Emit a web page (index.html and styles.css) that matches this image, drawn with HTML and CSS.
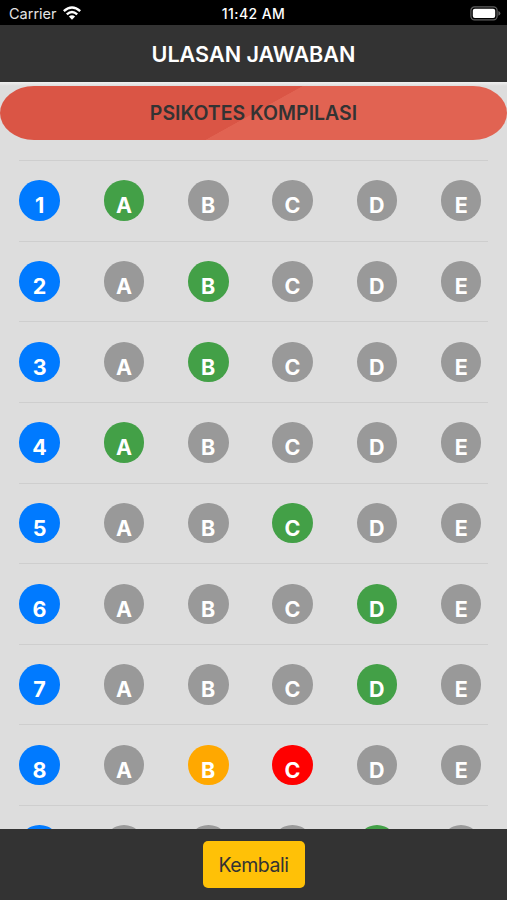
FILE: index.html
```html
<!DOCTYPE html>
<html lang="id">
<head>
  <meta charset="UTF-8">
  <meta name="viewport" content="width=device-width, initial-scale=1.0">
  <title>Ulasan Jawaban</title>
  <link rel="stylesheet" href="styles.css">
</head>
<body>
  <div class="status-bar">
    <div class="carrier">
      <span>Carrier</span>
      <svg class="wifi" viewBox="0 0 18 14" width="18" height="14">
        <g fill="none" stroke="#fff" stroke-width="2.4">
          <path d="M0.8 5.2 Q9 -2.4 17.2 5.2"/>
          <path d="M3.8 8.3 Q9 3.5 14.2 8.3"/>
        </g>
        <path d="M5.9 10.6 Q9 8 12.1 10.6 L9 13.8 Z" fill="#fff"/>
      </svg>
    </div>
    <span class="time">11:42 AM</span>
    <svg class="battery" viewBox="0 0 31 15" width="31" height="15">
      <rect x="0.9" y="0.9" width="26.2" height="13" rx="3.6" fill="none" stroke="#606060" stroke-width="1.2"/>
      <rect x="2.8" y="2.7" width="22.4" height="9.4" rx="2" fill="#fff"/>
      <path d="M28.4 5 Q30.4 6 30.4 7.4 Q30.4 8.8 28.4 9.8 Z" fill="#606060"/>
    </svg>
  </div>

  <header class="header">
    <h1>ULASAN JAWABAN</h1>
  </header>

  <main class="content">
    <h2 class="category">PSIKOTES KOMPILASI</h2>
    <div class="answers">
      <div class="row">
        <span class="circle number">1</span>
        <span class="circle correct">A</span>
        <span class="circle">B</span>
        <span class="circle">C</span>
        <span class="circle">D</span>
        <span class="circle">E</span>
      </div>
      <div class="row">
        <span class="circle number">2</span>
        <span class="circle">A</span>
        <span class="circle correct">B</span>
        <span class="circle">C</span>
        <span class="circle">D</span>
        <span class="circle">E</span>
      </div>
      <div class="row">
        <span class="circle number">3</span>
        <span class="circle">A</span>
        <span class="circle correct">B</span>
        <span class="circle">C</span>
        <span class="circle">D</span>
        <span class="circle">E</span>
      </div>
      <div class="row">
        <span class="circle number">4</span>
        <span class="circle correct">A</span>
        <span class="circle">B</span>
        <span class="circle">C</span>
        <span class="circle">D</span>
        <span class="circle">E</span>
      </div>
      <div class="row">
        <span class="circle number">5</span>
        <span class="circle">A</span>
        <span class="circle">B</span>
        <span class="circle correct">C</span>
        <span class="circle">D</span>
        <span class="circle">E</span>
      </div>
      <div class="row">
        <span class="circle number">6</span>
        <span class="circle">A</span>
        <span class="circle">B</span>
        <span class="circle">C</span>
        <span class="circle correct">D</span>
        <span class="circle">E</span>
      </div>
      <div class="row">
        <span class="circle number">7</span>
        <span class="circle">A</span>
        <span class="circle">B</span>
        <span class="circle">C</span>
        <span class="circle correct">D</span>
        <span class="circle">E</span>
      </div>
      <div class="row">
        <span class="circle number">8</span>
        <span class="circle">A</span>
        <span class="circle answer">B</span>
        <span class="circle wrong">C</span>
        <span class="circle">D</span>
        <span class="circle">E</span>
      </div>
      <div class="row">
        <span class="circle number"></span>
        <span class="circle"></span>
        <span class="circle"></span>
        <span class="circle"></span>
        <span class="circle correct"></span>
        <span class="circle"></span>
      </div>
    </div>
  </main>

  <footer class="footer">
    <button class="btn-back" type="button">Kembali</button>
  </footer>
</body>
</html>
```

FILE: styles.css
```css
* {
  box-sizing: border-box;
}
body {
  font-family: Inter, "Liberation Sans", sans-serif;
  margin: 0;
  height: 900px;
  display: flex;
  flex-direction: column;
  overflow: hidden;
  background: #ddd;
}
.status-bar {
  flex: none;
  display: grid;
  grid-template-columns: 1fr auto 1fr;
  align-items: center;
  height: 25px;
  padding: 2px 6px 0 9px;
  background: #000;
  color: #fff;
  font-size: 14.5px;
}
.carrier {
  display: flex;
  align-items: center;
  gap: 6px;
  color: #e4e4e4;
}
.wifi {
  margin-top: -2px;
}
.time {
  font-size: 14px;
  font-weight: 500;
  letter-spacing: 0.4px;
  margin-right: 3px;
}
.battery {
  justify-self: end;
  margin-top: -1px;
}
.header {
  flex: none;
  display: flex;
  align-items: center;
  justify-content: center;
  height: 57px;
  padding-top: 1px;
  background: #333;
  color: #fff;
}
.header h1 {
  margin: 0;
  font-size: 21.6px;
  font-weight: 600;
}
.content {
  flex: 1;
  min-height: 0;
  overflow: hidden;
  padding-top: 4px;
  background: linear-gradient(#f0f0f0 0, #ddd 4px);
}
.category {
  display: flex;
  align-items: center;
  justify-content: center;
  height: 54px;
  margin: 0 0 20px;
  border-radius: 34px / 27px;
  background: linear-gradient(151deg, #da5545 50%, #e16352 50.2%);
  color: #333;
  font-size: 19.5px;
  font-weight: 600;
}
.answers {
  padding: 0 19px;
}
.row {
  display: flex;
  justify-content: space-between;
  height: 80.65px;
  padding: 19.3px 6.5px 0 0.3px;
  border-top: 1px solid #cecece;
}
.circle {
  width: 40.6px;
  height: 40.6px;
  padding-top: 10.2px;
  border-radius: 50%;
  background: #999;
  color: #fff;
  font-size: 21.5px;
  font-weight: 700;
  line-height: 30px;
  text-align: center;
}
.number {
  background: #007aff;
}
.correct {
  background: #43a047;
}
.answer {
  background: #ffa800;
}
.wrong {
  background: #f00;
}
.footer {
  flex: none;
  display: flex;
  justify-content: center;
  height: 71px;
  padding-top: 12px;
  background: #333;
}
.btn-back {
  width: 102px;
  height: 47px;
  padding: 0;
  border: none;
  border-radius: 5px;
  background: #ffc107;
  color: #333;
  font-family: inherit;
  font-size: 19.5px;
  letter-spacing: -0.45px;
}
```
